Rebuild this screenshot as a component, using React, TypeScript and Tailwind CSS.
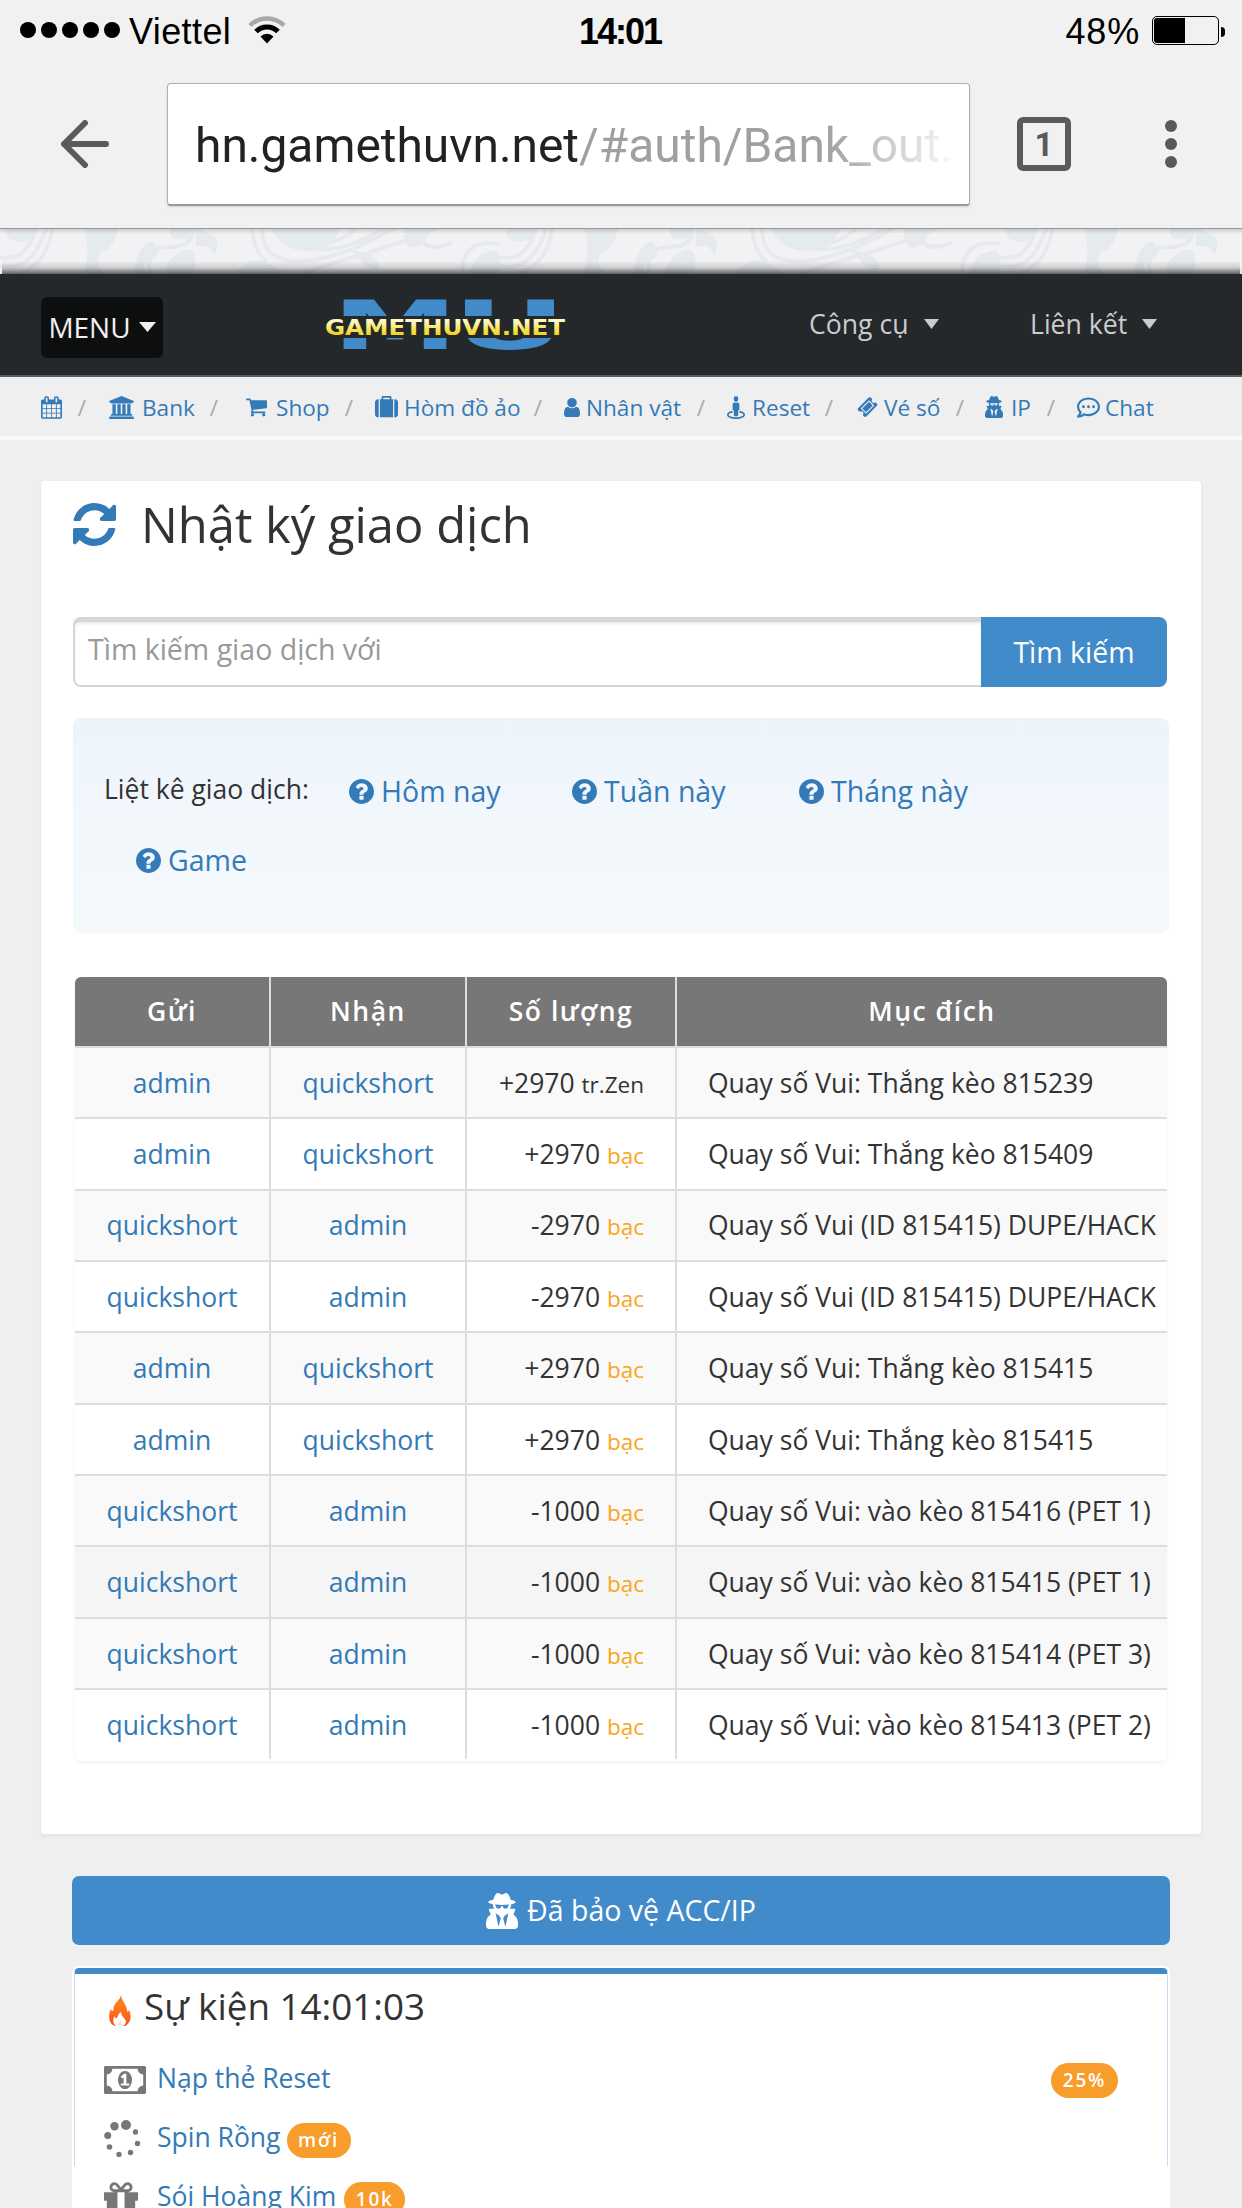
import type { ReactNode } from 'react'
import clsx from 'clsx'
import { FaRegCommentDots, FaStreetView, FaUserSecret } from 'react-icons/fa'

const paths = {
  refresh:
    'M1639 1056q0 5-1 7-64 268-268 434.5t-478 166.5q-146 0-282.5-55t-243.5-157l-129 129q-19 19-45 19t-45-19-19-45v-448q0-26 19-45t45-19h448q26 0 45 19t19 45-19 45l-137 137q71 66 161 102t187 36q134 0 250-65t186-179q11-17 53-117 8-23 30-23h192q13 0 22.5 9.5t9.5 22.5zm25-800v448q0 26-19 45t-45 19h-448q-26 0-45-19t-19-45 19-45l138-138q-148-137-349-137-134 0-250 65t-186 179q-11 17-53 117-8 23-30 23h-199q-13 0-22.5-9.5t-9.5-22.5v-7q65-268 270-434.5t480-166.5q146 0 284 55.5t245 156.5l130-129q19-19 45-19t45 19 19 45z',
  calendar:
    'M192 1664h288v-288h-288v288zm352 0h320v-288h-320v288zm-352-352h288v-320h-288v320zm352 0h320v-320h-320v320zm-352-384h288v-288h-288v288zm736 736h320v-288h-320v288zm-384-736h320v-288h-320v288zm768 736h288v-288h-288v288zm-384-352h320v-320h-320v320zm-352-864v-288q0-13-9.5-22.5t-22.5-9.5h-64q-13 0-22.5 9.5t-9.5 22.5v288q0 13 9.5 22.5t22.5 9.5h64q13 0 22.5-9.5t9.5-22.5zm736 864h288v-320h-288v320zm-384-384h320v-288h-320v288zm384 0h288v-288h-288v288zm32-480v-288q0-13-9.5-22.5t-22.5-9.5h-64q-13 0-22.5 9.5t-9.5 22.5v288q0 13 9.5 22.5t22.5 9.5h64q13 0 22.5-9.5t9.5-22.5zm384-64v1280q0 52-38 90t-90 38h-1408q-52 0-90-38t-38-90v-1280q0-52 38-90t90-38h128v-96q0-66 47-113t113-47h64q66 0 113 47t47 113v96h384v-96q0-66 47-113t113-47h64q66 0 113 47t47 113v96h128q52 0 90 38t38 90z',
  bank: 'M832 0l960 384v128h-128q0 26-20.5 45t-48.5 19h-1526q-28 0-48.5-19t-20.5-45h-128v-128zm-704 640h256v768h128v-768h256v768h128v-768h256v768h128v-768h256v768h59q28 0 48.5 19t20.5 45v64h-1664v-64q0-26 20.5-45t48.5-19h59v-768zm1595 960q28 0 48.5 19t20.5 45v128h-1920v-128q0-26 20.5-45t48.5-19h1782z',
  cart: 'M704 1536q0 52-38 90t-90 38-90-38-38-90 38-90 90-38 90 38 38 90zm896 0q0 52-38 90t-90 38-90-38-38-90 38-90 90-38 90 38 38 90zm128-1088v512q0 24-16.5 42.5t-40.5 21.5l-1044 122q13 60 13 70 0 16-24 64h920q26 0 45 19t19 45-19 45-45 19h-1024q-26 0-45-19t-19-45q0-11 8-31.5t16-36 21.5-40 15.5-29.5l-177-823h-204q-26 0-45-19t-19-45 19-45 45-19h256q16 0 28.5 6.5t19.5 15.5 13 24.5 8 26 5.5 29.5 4.5 26h1201q26 0 45 19t19 45z',
  suitcase:
    'M640 256h512v-128h-512v128zm-352 0v1408h-64q-92 0-158-66t-66-158v-960q0-92 66-158t158-66h64zm1120 0v1408h-1024v-1408h128v-160q0-40 28-68t68-28h576q40 0 68 28t28 68v160h128zm384 224v960q0 92-66 158t-158 66h-64v-1408h64q92 0 158 66t66 158z',
  user: 'M1536 1399q0 109-62.5 187t-150.5 78h-854q-88 0-150.5-78t-62.5-187q0-85 8.5-160.5t31.5-152 58.5-131 94-89 134.5-34.5q131 128 313 128t313-128q76 0 134.5 34.5t94 89 58.5 131 31.5 152 8.5 160.5zm-256-887q0 159-112.5 271.5t-271.5 112.5-271.5-112.5-112.5-271.5 112.5-271.5 271.5-112.5 271.5 112.5 112.5 271.5z',
  ticket:
    'M1024 452l316 316-572 572-316-316zm-211 979l618-618q19-19 19-45t-19-45l-362-362q-18-18-45-18t-45 18l-618 618q-19 19-19 45t19 45l362 362q18 18 45 18t45-18zm889-637l-907 908q-37 37-90.5 37t-90.5-37l-126-126q56-56 56-136t-56-136-136-56-136 56l-125-126q-37-37-37-90.5t37-90.5l907-906q37-37 90.5-37t90.5 37l125 125q-56 56-56 136t56 136 136 56 136-56l126 125q37 37 37 90.5t-37 90.5z',
  question:
    'M1024 1376v-192q0-14-9-23t-23-9h-192q-14 0-23 9t-9 23v192q0 14 9 23t23 9h192q14 0 23-9t9-23zm256-672q0-88-55.5-163t-138.5-116-170-41q-243 0-371 213-15 24 8 42l132 100q7 6 19 6 16 0 25-12 53-68 86-92 34-24 86-24 48 0 85.5 26t37.5 59q0 38-20 61t-68 45q-63 28-115.5 86.5t-52.5 125.5v36q0 14 9 23t23 9h192q14 0 23-9t9-23q0-19 21.5-49.5t54.5-49.5q32-18 49-28.5t46-35 44.5-48 28-60.5 12.5-81zm384 192q0 209-103 385.5t-279.5 279.5-385.5 103-385.5-103-279.5-279.5-103-385.5 103-385.5 279.5-279.5 385.5-103 385.5 103 279.5 279.5 103 385.5z',
  money:
    'M704 1152h384v-96h-128v-448h-114l-148 137 77 80q42-37 55-57h2v288h-128v96zm512-256q0 70-21 142t-59.5 134-101.5 101-138 39-138-39-101.5-101-59.5-134-21-142 21-142 59.5-134 101.5-101 138-39 138 39 101.5 101 59.5 134 21 142zm512 256v-512q-106 0-181-75t-75-181h-1152q0 106-75 181t-181 75v512q106 0 181 75t75 181h1152q0-106 75-181t181-75zm128-832v1152q0 26-19 45t-45 19h-1792q-26 0-45-19t-19-45v-1152q0-26 19-45t45-19h1792q26 0 45 19t19 45z',
  gift: 'M1056 1356v-716h-320v716q0 25 18 38.5t46 13.5h192q28 0 46-13.5t18-38.5zm-456-844h195l-126-161q-26-31-69-31-40 0-68 28t-28 68 28 68 68 28zm688-96q0-40-28-68t-68-28q-43 0-69 31l-125 161h194q40 0 68-28t28-68zm376 256v320q0 14-9 23t-23 9h-96v416q0 40-28 68t-68 28h-1088q-40 0-68-28t-28-68v-416h-96q-14 0-23-9t-9-23v-320q0-14 9-23t23-9h440q-93 0-158.5-65.5t-65.5-158.5 65.5-158.5 158.5-65.5q107 0 168 77l128 165 128-165q61-77 168-77 93 0 158.5 65.5t65.5 158.5-65.5 158.5-158.5 65.5h440q14 0 23 9t9 23z',
}

function Icon({ name, box = '0 0 1792 1792', className }: { name: keyof typeof paths; box?: string; className?: string }) {
  return (
    <svg viewBox={box} fill="currentColor" className={clsx('shrink-0', className)}>
      <path d={paths[name]} />
    </svg>
  )
}

function Caret({ className }: { className?: string }) {
  return (
    <svg viewBox="0 0 16 9" className={className} fill="currentColor" preserveAspectRatio="none">
      <path d="M0 0h16l-8 9z" />
    </svg>
  )
}

const crumbs: { label: string; icon: ReactNode; className: string }[] = [
  { label: '', className: 'w-[68px] pr-[23px]', icon: <Icon name="calendar" box="64 0 1664 1792" className="w-[21px] h-[23px]" /> },
  { label: 'Bank', className: 'w-[137px] gap-[8px] pr-[28px]', icon: <Icon name="bank" box="-128 0 1920 1792" className="w-[25px] h-[23px]" /> },
  { label: 'Shop', className: 'w-[129px] gap-[9px] pr-[22px]', icon: <Icon name="cart" box="64 128 1664 1664" className="w-[21px] h-[21px]" /> },
  { label: 'Hòm đồ ảo', className: 'w-[189px] gap-[6px] pr-[22px]', icon: <Icon name="suitcase" className="w-[23px] h-[23px]" /> },
  { label: 'Nhân vật', className: 'w-[163px] gap-[6px] pr-[22px]', icon: <Icon name="user" box="256 0 1280 1792" className="w-[16px] h-[23px]" /> },
  { label: 'Reset', className: 'w-[130px] gap-[7px] pr-[24px]', icon: <FaStreetView className="w-[18px] h-[23px] shrink-0" preserveAspectRatio="none" /> },
  { label: 'Vé số', className: 'w-[128px] gap-[6px] pr-[21px]', icon: <Icon name="ticket" className="w-[21px] h-[22px]" /> },
  { label: 'IP', className: 'w-[92px] gap-[8px] pr-[22px]', icon: <FaUserSecret className="w-[18px] h-[22px] shrink-0" preserveAspectRatio="none" /> },
  { label: 'Chat', className: 'gap-[5px]', icon: <FaRegCommentDots className="w-[23px] h-[23px] shrink-0" /> },
]

const rows = [
  { from: 'admin', to: 'quickshort', amount: '+2970', unit: 'tr.Zen', note: 'Quay số Vui: Thắng kèo 815239' },
  { from: 'admin', to: 'quickshort', amount: '+2970', unit: 'bạc', note: 'Quay số Vui: Thắng kèo 815409' },
  { from: 'quickshort', to: 'admin', amount: '-2970', unit: 'bạc', note: 'Quay số Vui (ID 815415) DUPE/HACK' },
  { from: 'quickshort', to: 'admin', amount: '-2970', unit: 'bạc', note: 'Quay số Vui (ID 815415) DUPE/HACK' },
  { from: 'admin', to: 'quickshort', amount: '+2970', unit: 'bạc', note: 'Quay số Vui: Thắng kèo 815415' },
  { from: 'admin', to: 'quickshort', amount: '+2970', unit: 'bạc', note: 'Quay số Vui: Thắng kèo 815415' },
  { from: 'quickshort', to: 'admin', amount: '-1000', unit: 'bạc', note: 'Quay số Vui: vào kèo 815416 (PET 1)' },
  { from: 'quickshort', to: 'admin', amount: '-1000', unit: 'bạc', note: 'Quay số Vui: vào kèo 815415 (PET 1)', active: true },
  { from: 'quickshort', to: 'admin', amount: '-1000', unit: 'bạc', note: 'Quay số Vui: vào kèo 815414 (PET 3)' },
  { from: 'quickshort', to: 'admin', amount: '-1000', unit: 'bạc', note: 'Quay số Vui: vào kèo 815413 (PET 2)' },
]

function StatusBar() {
  return (
    <div className="h-[63px] px-[17px] grid grid-cols-3 items-center font-['Liberation_Sans',sans-serif] text-[36px] leading-none text-black">
      <div className="flex items-center">
        <div className="flex gap-[5px] pl-[3px] -mt-[3px]">
          {[0, 1, 2, 3, 4].map((i) => (
            <span key={i} className="size-4 rounded-full bg-black" />
          ))}
        </div>
        <span className="ml-[9px] tracking-[0.4px]">Viettel</span>
        <svg viewBox="0 0 38 28" className="w-[38px] h-[28px] ml-[17px] -mt-[3px]" fill="none">
          <path d="M2 9.500a24 24 0 0 1 34 0" stroke="#a8a8a8" strokeWidth="4.500" />
          <path d="M8 15.500a15.500 15.500 0 0 1 22 0" stroke="#000" strokeWidth="5" />
          <path d="M12.500 20.500a9.200 9.200 0 0 1 13 0L19 27.500z" fill="#000" />
        </svg>
      </div>
      <div className="text-center font-bold tracking-[-2px] pr-[2px]">14:01</div>
      <div className="flex items-center justify-end">
        <span className="tracking-[0.8px]">48%</span>
        <div className="ml-[12px] -mt-[2px] w-[67px] h-[29px] rounded-[5px] border border-black p-px">
          <div className="w-[31px] h-full rounded-l-[3px] bg-black" />
        </div>
        <span className="ml-[2px] w-[4px] h-[10px] rounded-r-full bg-black" />
      </div>
    </div>
  )
}

function Toolbar() {
  return (
    <div className="h-[166px] pb-[3px] border-b border-[#999] flex items-center text-[#5a5a5a]">
      <svg viewBox="0 0 48 48" className="w-[48px] h-[48px] ml-[61px]" fill="none" stroke="currentColor" strokeWidth="6" strokeLinecap="round" strokeLinejoin="round">
        <path d="M45 24H3M24 3L3 24l21 21" />
      </svg>
      <div className="ml-[58px] w-[803px] h-[123px] pl-[27px] bg-white rounded-[4px] border border-[#b0b0b0] border-b-2 border-b-[#999] shadow-sm flex items-center">
        <div className="w-[760px] whitespace-nowrap font-['Roboto',sans-serif] text-[47.9px] leading-[60px] pt-[4px] text-[#a0a0a0] [mask-image:linear-gradient(to_right,black_83%,transparent_101%)]">
          <span className="text-[#222]">hn.gamethuvn.net</span>/#auth/Bank_out.
        </div>
      </div>
      <div className="ml-[47px] size-[54px] rounded-[6px] border-[6px] border-current flex items-center justify-center font-['Roboto',sans-serif] font-bold text-[33px] leading-none">
        1
      </div>
      <div className="ml-[94px] flex flex-col gap-[6px]">
        <span className="size-3 rounded-full bg-current" />
        <span className="size-3 rounded-full bg-current" />
        <span className="size-3 rounded-full bg-current" />
      </div>
    </div>
  )
}

// faint damask strip that shows above the navbar
function Pattern() {
  return (
    <div className="h-[45px] bg-[#f2f2f5] relative overflow-hidden">
      <svg width="1242" height="45" className="block">
        <defs>
          <pattern id="damask" width="500" height="45" patternUnits="userSpaceOnUse">
            <g fill="none" stroke="#e6eaed" strokeWidth="4" strokeLinecap="round">
              <path d="M-10 34Q30 50 46 0M-6 26Q24 38 36 0M52 0q-4 34-34 46M96 0q-16 26 8 46M150 44q-6-26 20-26t22-22M262 0q0 34 40 32t94-34M276 -4q4 24 34 22t50-22M252 0q2 22 14 32M300 46q30-12 60-20t80-28M236 46q12-14 20-8M290 12q40 22 96-14" />
              <path d="M462 46q0-32 28-32t30 20M472 46q2-22 24-22M420 10q10 14 30 4" />
            </g>
            <g fill="#e5eaec">
              <path d="M84 0h34q-4 18-14 22t-2 24H82q10-22 2-46zM134 46q2-30 18-34 12 14-2 20t2 14zM164 46q4-22 26-26 10 8 2 26zM170 0q-2 12 14 10t8-10zM196 0q30 6 18 26-4-12-18-8zM270 0q16 24 40 22t30-22zM240 46q4-18 22-14 14 6 24 14zM470 46q6-26 30-20v20zM404 0h26q-2 14-14 18t-12-18zM352 22q20 0 26 12t-14 2z" />
              <ellipse cx="20" cy="4" rx="14" ry="9" />
            </g>
          </pattern>
        </defs>
        <rect width="1242" height="45" fill="url(#damask)" />
      </svg>
      <div className="absolute inset-x-0 top-0 h-[5px] bg-linear-to-b from-black/15 to-transparent" />
      <div className="absolute inset-x-[2px] bottom-0 h-[13px] bg-linear-to-t from-black/60 via-black/15 to-transparent" />
    </div>
  )
}

function Logo() {
  return (
    <svg viewBox="0 0 240 54" className="w-[240px] h-[54px] ml-[162px] overflow-visible">
      <defs>
        <linearGradient id="gold" x1="0" y1="0" x2="0" y2="1">
          <stop offset="0.2" stopColor="#fff9c8" />
          <stop offset="0.8" stopColor="#f0d40c" />
        </linearGradient>
      </defs>
      <g fill="#428bca" fontFamily="DejaVu Sans" fontWeight="bold" fontSize="67">
        <text x="7" y="51" textLength="126" lengthAdjust="spacingAndGlyphs">M</text>
        <text x="127" y="51" textLength="115" lengthAdjust="spacingAndGlyphs">U</text>
      </g>
      <rect y="18" width="240" height="22" fill="#24282b" />
      <text x="0" y="37" fill="url(#gold)" fontFamily="DejaVu Sans" fontWeight="bold" fontSize="21" textLength="240" lengthAdjust="spacingAndGlyphs">
        GAMETHUVN.NET
      </text>
    </svg>
  )
}

function Navbar() {
  return (
    <div className="h-[103px] bg-[#24282b] border-b-2 border-[#5a5d5f] flex items-center text-[26.6px] text-[#ccc]">
      <button className="mt-[5px] ml-[41px] w-[122px] h-[61px] rounded-[6px] bg-[#0d0f0f] text-[#f0f0f0] text-[28px] flex items-center justify-center gap-[8px]">
        MENU
        <Caret className="w-[17px] h-[10px]" />
      </button>
      <Logo />
      <div className="ml-[244px] flex items-center">
        <span className="w-[115px]">Công cụ</span>
        <Caret className="w-[15px] h-[10px]" />
      </div>
      <div className="ml-[91px] flex items-center">
        <span className="w-[112px]">Liên kết</span>
        <Caret className="w-[15px] h-[10px]" />
      </div>
    </div>
  )
}

function QuickLink({ children, className }: { children: ReactNode; className?: string }) {
  return (
    <a className={clsx('flex items-center gap-[7px] text-[28.5px] text-[#337ab7]', className)}>
      <Icon name="question" box="128 128 1536 1536" className="size-[25px]" />
      {children}
    </a>
  )
}

function Badge({ children, className }: { children: ReactNode; className?: string }) {
  return (
    <span className={clsx('h-[35px] rounded-full bg-[#f89c2c] text-white text-[19px] font-semibold tracking-[1.8px] flex items-center justify-center', className)}>
      {children}
    </span>
  )
}

function Spinner() {
  return (
    <svg viewBox="0 0 37 37" className="size-[37px]" fill="currentColor">
      <circle cx="22" cy="5" r="5" />
      <circle cx="31.500" cy="12" r="2.700" />
      <circle cx="33.500" cy="23.500" r="2.700" />
      <circle cx="26.500" cy="32.500" r="2.700" />
      <circle cx="15" cy="34.500" r="2.700" />
      <circle cx="5.500" cy="27" r="2.800" />
      <circle cx="3.700" cy="15.500" r="3.500" />
      <circle cx="10.500" cy="6.300" r="4.200" />
    </svg>
  )
}

function Flame() {
  return (
    <svg viewBox="0 0 22 32" className="w-[22px] h-[32px]">
      <defs>
        <linearGradient id="fire" x1="0" y1="0" x2="0" y2="1">
          <stop offset="0.4" stopColor="#ff7a1a" />
          <stop offset="1" stopColor="#f4511e" />
        </linearGradient>
      </defs>
      <path d="M12 0c-1 5-5 7-7 11-1 2 0 4-1 5-1 0-2-1-2-2-3 6-3 14 4 17h10c6-3 7-10 4-16-1 2-2 2-2 0 0-5-5-8-6-15z" fill="url(#fire)" />
      <path d="M7 31c-4-3-3-8-1-10 0 2 1 3 2 2 1-3 2-5 4-6 0 4 4 6 5 9 0 2-1 4-3 5z" fill="#fff" />
      <path d="M9 31c0-3 1-5 2-6 2 2 2 4 2 6z" fill="#fde3d0" />
    </svg>
  )
}

export default function App() {
  const cell = 'h-full flex items-center border-r-2 border-[#ddd]'
  const cols = 'grid grid-cols-[196px_196px_210px_1fr]'

  return (
    <main className="w-[1242px] h-[2208px] overflow-hidden bg-[#efefef] font-['Open_Sans',sans-serif] text-[#333] whitespace-nowrap">
      <header className="bg-[#f1f1f1]">
        <StatusBar />
        <Toolbar />
      </header>
      <Pattern />
      <Navbar />

      <nav className="h-[63px] pt-[2px] pl-[41px] border-b-4 border-[#fafafa] flex items-center text-[22.6px] text-[#337ab7]">
        {crumbs.map((c, i) => (
          <div key={i} className={clsx('flex items-center', c.className)}>
            {c.icon}
            {c.label}
            {i < crumbs.length - 1 && <span className="ml-auto text-[#aaa]">/</span>}
          </div>
        ))}
      </nav>

      <section className="mt-[41px] mx-[41px] h-[1353px] px-[32px] bg-white rounded-[4px] shadow-[0_2px_4px_rgba(0,0,0,0.06)]">
        <h1 className="h-[84px] pt-[3px] flex items-center text-[48.9px]">
          <Icon name="refresh" box="128 128 1536 1536" className="size-[43px] mr-[25px] text-[#337ab7]" />
          Nhật ký giao dịch
        </h1>

        <form className="mt-[52px] w-[1094px] h-[70px] flex">
          <input
            placeholder="Tìm kiếm giao dịch với"
            className="flex-1 pl-[13px] pb-[8px] text-[28.5px] placeholder-[#999] border-2 border-t-[5px] border-[#d6d6d6] border-r-0 rounded-l-[8px] shadow-[inset_0_2px_3px_rgba(0,0,0,0.08)]"
          />
          <button type="button" className="w-[186px] rounded-r-[8px] bg-[#428bca] text-white text-[28.5px]">
            Tìm kiếm
          </button>
        </form>

        <div className="mt-[31px] w-[1096px] h-[215px] pt-[38px] rounded-[8px] bg-linear-to-b from-[#ecf4fc] via-[#f2f7fc] via-45% to-[#f4f9fc]">
          <div className="h-[70px] flex items-center">
            <span className="w-[245px] ml-[31px] -mt-[2px] text-[26.5px]">Liệt kê giao dịch:</span>
            <QuickLink className="w-[223px]">Hôm nay</QuickLink>
            <QuickLink className="w-[227px]">Tuần này</QuickLink>
            <QuickLink>Tháng này</QuickLink>
          </div>
          <div className="h-[68px] flex items-center">
            <QuickLink className="ml-[63px]">Game</QuickLink>
          </div>
        </div>

        <div className="mt-[44px] ml-[2px] w-[1092px] text-[26.5px] rounded-[6px] overflow-hidden shadow-[0_2px_3px_rgba(0,0,0,0.06)]">
          <div className={clsx(cols, 'h-[71px] bg-[#777] text-white font-semibold tracking-[1.5px] border-b-2 border-[#ddd]')}>
            <div className={clsx(cell, 'justify-center pt-px')}>Gửi</div>
            <div className={clsx(cell, 'justify-center pt-px')}>Nhận</div>
            <div className={clsx(cell, 'justify-center pt-px')}>Số lượng</div>
            <div className="flex items-center justify-center pl-[20px] pt-px">Mục đích</div>
          </div>
          {rows.map((r, i) => (
            <div
              key={i}
              className={clsx(cols, 'h-[71.35px] border-b-2 border-[#ddd] last:border-transparent', r.active ? 'bg-[#f5f5f5]' : i % 2 ? 'bg-white' : 'bg-[#f9f9f9]')}
            >
              <div className={clsx(cell, 'justify-center pt-[2px] text-[#337ab7]')}>{r.from}</div>
              <div className={clsx(cell, 'justify-center pt-[2px] text-[#337ab7]')}>{r.to}</div>
              <div className={clsx(cell, 'justify-end pt-[2px] pr-[31px]')}>
                <span>
                  {r.amount} <small className={clsx('text-[22.5px]', r.unit === 'bạc' && 'text-[#f9a51a]')}>{r.unit}</small>
                </span>
              </div>
              <div className="flex items-center pt-[2px] pl-[31px]">{r.note}</div>
            </div>
          ))}
        </div>
      </section>

      <button className="mt-[42px] ml-[72px] w-[1098px] h-[69px] rounded-[7px] bg-[#428bca] text-white text-[28.5px] flex items-center justify-center gap-[9px]">
        <FaUserSecret className="w-[32px] h-[36px]" preserveAspectRatio="none" />
        Đã bảo vệ ACC/IP
      </button>

      <section className="mt-[21px] ml-[72px] w-[1098px] h-[300px] p-[2px] bg-white rounded-t-[6px]">
        <div className="h-[198px] px-[29px] rounded-t-[5px] border-x border-x-[#c6dcef] border-t-[6px] border-t-[#428bca]">
          <h2 className="h-[66px] flex items-center text-[36.8px]">
            <span className="ml-[5px] mt-[8px] mr-[13px]">
              <Flame />
            </span>
            Sự kiện 14:01:03
          </h2>
          <ul className="mt-[9px] text-[26.5px] text-[#337ab7]">
            <li className="h-[59px] flex items-center">
              <span className="w-[53px] mt-[3px] text-[#777]">
                <Icon name="money" box="-64 256 1920 1280" className="w-[42px] h-[28px]" />
              </span>
              Nạp thẻ Reset
              <Badge className="ml-auto mr-[20px] mt-[4px] w-[67px]">25%</Badge>
            </li>
            <li className="h-[59px] flex items-center">
              <span className="w-[53px] mt-[2px] text-[#777]">
                <Spinner />
              </span>
              Spin Rồng
              <Badge className="ml-[6px] mt-[5px] w-[64px]">mới</Badge>
            </li>
            <li className="h-[59px] flex items-center">
              <span className="w-[53px] mt-[4px] text-[#777]">
                <Icon name="gift" box="128 192 1536 1472" className="w-[34px] h-[33px]" />
              </span>
              Sói Hoàng Kim
              <Badge className="ml-[8px] mt-[5px] w-[61px]">10k</Badge>
            </li>
          </ul>
        </div>
      </section>
    </main>
  )
}
